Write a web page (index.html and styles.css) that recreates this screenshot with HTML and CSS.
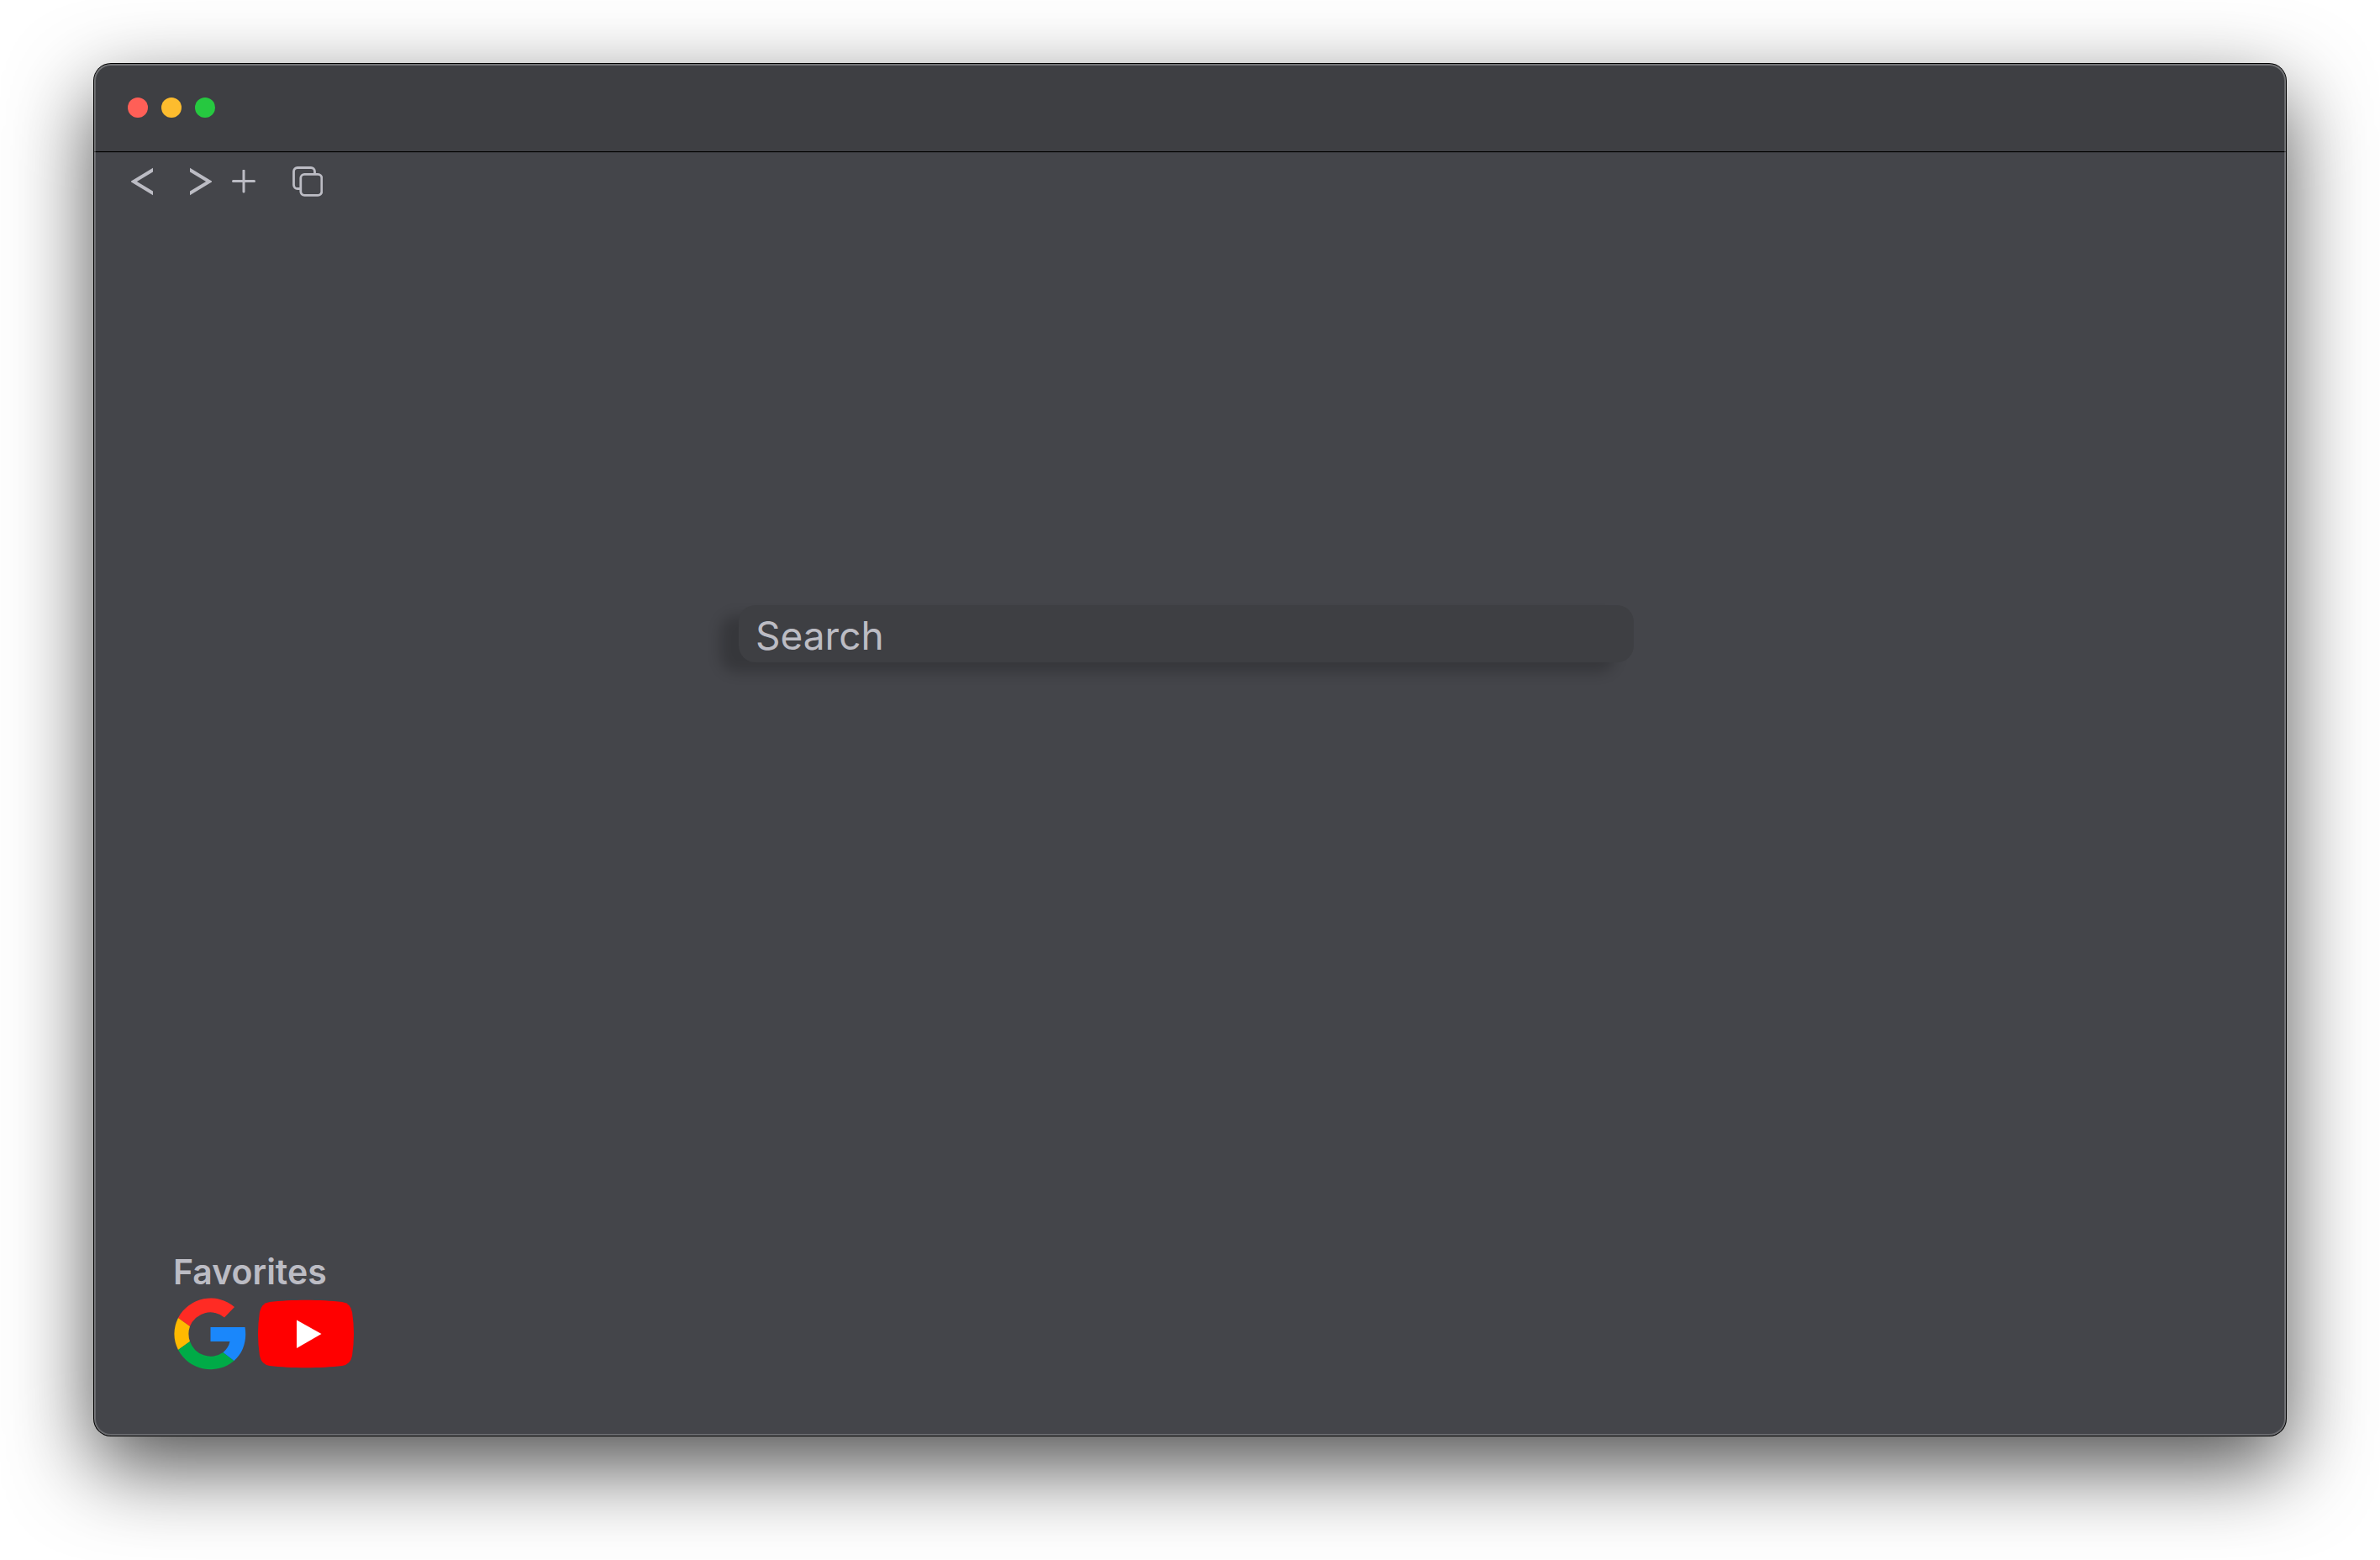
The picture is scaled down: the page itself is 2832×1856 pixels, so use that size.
FILE: index.html
```html
<!DOCTYPE html>
<html lang="en">
<head>
<meta charset="utf-8">
<title>Browser</title>
<link rel="stylesheet" href="styles.css">
</head>
<body>
<div class="window">
  <header class="titlebar">
    <button class="light light-close" aria-label="Close"></button>
    <button class="light light-minimize" aria-label="Minimize"></button>
    <button class="light light-zoom" aria-label="Zoom"></button>
  </header>
  <nav class="toolbar" aria-label="Navigation">
    <button class="tool tool-back" aria-label="Back">
      <svg width="26" height="34" viewBox="0 0 26 34" fill="none" stroke="currentColor" stroke-width="4"><path d="M28 2L3 17L28 32"/></svg>
    </button>
    <button class="tool tool-forward" aria-label="Forward">
      <svg width="26" height="34" viewBox="0 0 26 34" fill="none" stroke="currentColor" stroke-width="4"><path d="M-2 2L23 17L-2 32"/></svg>
    </button>
    <button class="tool tool-add" aria-label="New tab">
      <svg width="28" height="28" viewBox="0 0 28 28" fill="none" stroke="currentColor" stroke-width="3" stroke-linecap="round"><path d="M14 1v25M1.500 13.500h25"/></svg>
    </button>
    <button class="tool tool-tabs" aria-label="Show tabs">
      <svg width="36" height="36" viewBox="0 0 36 36" fill="none" stroke="currentColor" stroke-width="2.800"><rect x="9.800" y="9.300" width="25" height="25" rx="4.500"/><path d="M9.500 26.500H6a4.500 4.500 0 0 1-4.500-4.500V6A4.500 4.500 0 0 1 6 1.500h16A4.500 4.500 0 0 1 26.500 6v3"/></svg>
    </button>
  </nav>
  <main class="page">
    <form class="search">
      <input class="search-field" type="text" placeholder="Search" aria-label="Search">
    </form>
    <section class="favorites">
      <h2 class="favorites-title">Favorites</h2>
      <div class="favorites-list">
        <a class="favorite" href="#google" aria-label="Google">
          <svg width="88" height="88" viewBox="0 0 88 88">
            <path fill="#ff2b24" d="M6 25A43.500 43.500 0 0 1 73 12L61 24.500A26 26 0 0 0 20 35Z"/>
            <path fill="#ffb900" d="M6 25L20 35A27 27 0 0 0 20 53L6 63A43.500 43.500 0 0 1 6 25Z"/>
            <path fill="#00ab47" d="M6 63L20 53A26 26 0 0 0 59.500 66L72.500 76A43.500 43.500 0 0 1 6 63Z"/>
            <path fill="#1a87fb" d="M44.500 36H85.500C88 51 84 66 72.500 76L59.500 66Q66 60.500 67.500 53H44.500Z"/>
          </svg>
        </a>
        <a class="favorite" href="#youtube" aria-label="YouTube">
          <svg width="116" height="82" viewBox="0 0 116 82">
            <path fill="#f00" d="M15 3C40 0 76 0 101 3Q111 4.500 113 15Q117 41 113 67Q111 77.500 101 79C76 82 40 82 15 79Q5 77.500 3 67Q-1 41 3 15Q5 4.500 15 3Z"/>
            <path fill="#fff" d="M47 24.500L76.500 41L47 58Z"/>
          </svg>
        </a>
      </div>
    </section>
  </main>
</div>
</body>
</html>
```
FILE: styles.css
```css
* {
  box-sizing: border-box;
}

body {
  margin: 0;
  padding: 76px 112px 148px;
  min-height: 100vh;
  display: flex;
  background: #fff;
  color: #bcbcc4;
  font-family: Inter, "Liberation Sans", sans-serif;
}

button {
  margin: 0;
  padding: 0;
  border: 0;
  background: none;
  color: inherit;
  font: inherit;
}

svg {
  display: block;
}

.window {
  position: relative;
  flex: 1;
  display: flex;
  flex-direction: column;
  border-radius: 20px;
  overflow: hidden;
  background: #44454a;
  box-shadow: 0 0 0 1px #000, 0 36px 100px rgba(0, 0, 0, 0.7);
}

/* Light rim laid over the edge of the window */
.window::after {
  content: "";
  position: absolute;
  inset: 0;
  border-radius: 20px;
  box-shadow: inset 0 0 0 2px rgba(255, 255, 255, 0.2), inset 0 1px 0 1px rgba(255, 255, 255, 0.1);
  pointer-events: none;
}

.titlebar {
  display: flex;
  align-items: center;
  gap: 16px;
  height: 105px;
  padding: 0 40px;
  background: #3e3f43;
  border-bottom: 1px solid #000;
  box-shadow: 0 1px 0 #3a3b3f;
}

.light {
  width: 24px;
  height: 24px;
  border-radius: 50%;
}

.light-close {
  background: #ff5f57;
}

.light-minimize {
  background: #fdbc2e;
}

.light-zoom {
  background: #26c840;
}

.toolbar {
  display: flex;
  align-items: center;
  height: 70px;
  padding: 0 44px;
}

.tool-forward {
  margin-left: 44px;
}

.tool-add {
  margin-left: 24px;
}

.tool-tabs {
  margin-left: 44px;
}

.page {
  flex: 1;
  display: flex;
  flex-direction: column;
  justify-content: space-between;
  padding: 469px 94px 77px;
}

.search {
  width: 44%;
  margin-left: 673px;
}

.search-field {
  display: block;
  width: 100%;
  height: 68px;
  padding: 4px 20px 0;
  border: 0;
  border-radius: 20px;
  outline: 0;
  background: #3e3f43;
  box-shadow: -22px 12px 16px rgba(0, 0, 0, 0.2);
  color: inherit;
  font: 400 46px Inter, "Liberation Sans", sans-serif;
}

.search-field::placeholder {
  color: #bcbcc4;
  opacity: 1;
}

.favorites-title {
  margin: 0 0 4px;
  font-size: 41px;
  line-height: 52px;
  font-weight: 600;
}

.favorites-list {
  display: flex;
  align-items: center;
  gap: 12px;
}
```
